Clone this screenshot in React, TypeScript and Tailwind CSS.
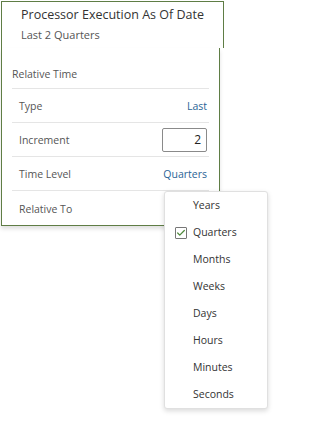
import { Check } from "lucide-react";

const rows = [
  { label: "Type", value: "Last" },
  { label: "Increment", value: "input" },
  { label: "Time Level", value: "Quarters" },
  { label: "Relative To", value: "" },
];

const levels = ["Years", "Quarters", "Months", "Weeks", "Days", "Hours", "Minutes", "Seconds"];

export default function App() {
  return (
    <div
      className="relative w-[282px] h-[421px] bg-white overflow-hidden"
      style={{ fontFamily: '"Open Sans", "Noto Sans", sans-serif' }}
    >
      <div className="pt-[1px] pl-[1px]">
        {/* Header */}
        <div className="w-[223px] h-[47px] border-t border-l border-r border-[#5f7d45] bg-white flex flex-col pl-[19px] pt-[3px]">
          <div className="text-[12.5px] leading-[20px] text-[#333]">Processor Execution As Of Date</div>
          <div className="text-[11px] leading-[20px] text-[#555]">Last 2 Quarters</div>
        </div>

        {/* Popover */}
        <div className="w-[219px] h-[178px] border-l border-r border-b border-[#5f7d45] bg-white shadow-[0_3px_4px_rgba(0,0,0,0.12)] px-[10px] pt-[16px]">
          <div className="text-[10.5px] leading-[20px] text-[#555] pb-[4px] border-b border-[#e5e5e5]">
            Relative Time
          </div>
          {rows.map((r, i) => (
            <div
              key={r.label}
              className={`h-[34px] flex items-center justify-between pl-[7px] pr-[2px] pt-[3px] text-[10.5px] ${
                i < rows.length - 1 ? "border-b border-[#e5e5e5]" : ""
              }`}
            >
              <span className="text-[#555]">{r.label}</span>
              {r.value === "input" ? (
                <div className="w-[45px] h-[24px] -mt-[3px] border border-[#8a8a8a] rounded-[2px] flex items-center justify-end pr-[5px] text-[12px] text-[#222]">
                  2
                </div>
              ) : (
                <span className="text-[#2a6496]">{r.value}</span>
              )}
            </div>
          ))}
        </div>
      </div>

      {/* Time level dropdown */}
      <div className="absolute left-[164px] top-[191px] w-[104px] bg-white border border-[#e0e0e0] rounded-[3px] shadow-[0_2px_5px_rgba(0,0,0,0.15)]">
        {levels.map((l) => (
          <div key={l} className="h-[27px] flex items-center text-[10.5px] text-[#333]">
            <div className="w-[28px] flex justify-end pr-[6px]">
              {l === "Quarters" && (
                <div className="w-[12px] h-[12px] border border-[#777] rounded-[1px] flex items-center justify-center">
                  <Check size={10} strokeWidth={3} className="text-[#4f8a3c]" />
                </div>
              )}
            </div>
            <span>{l}</span>
          </div>
        ))}
      </div>
    </div>
  );
}
